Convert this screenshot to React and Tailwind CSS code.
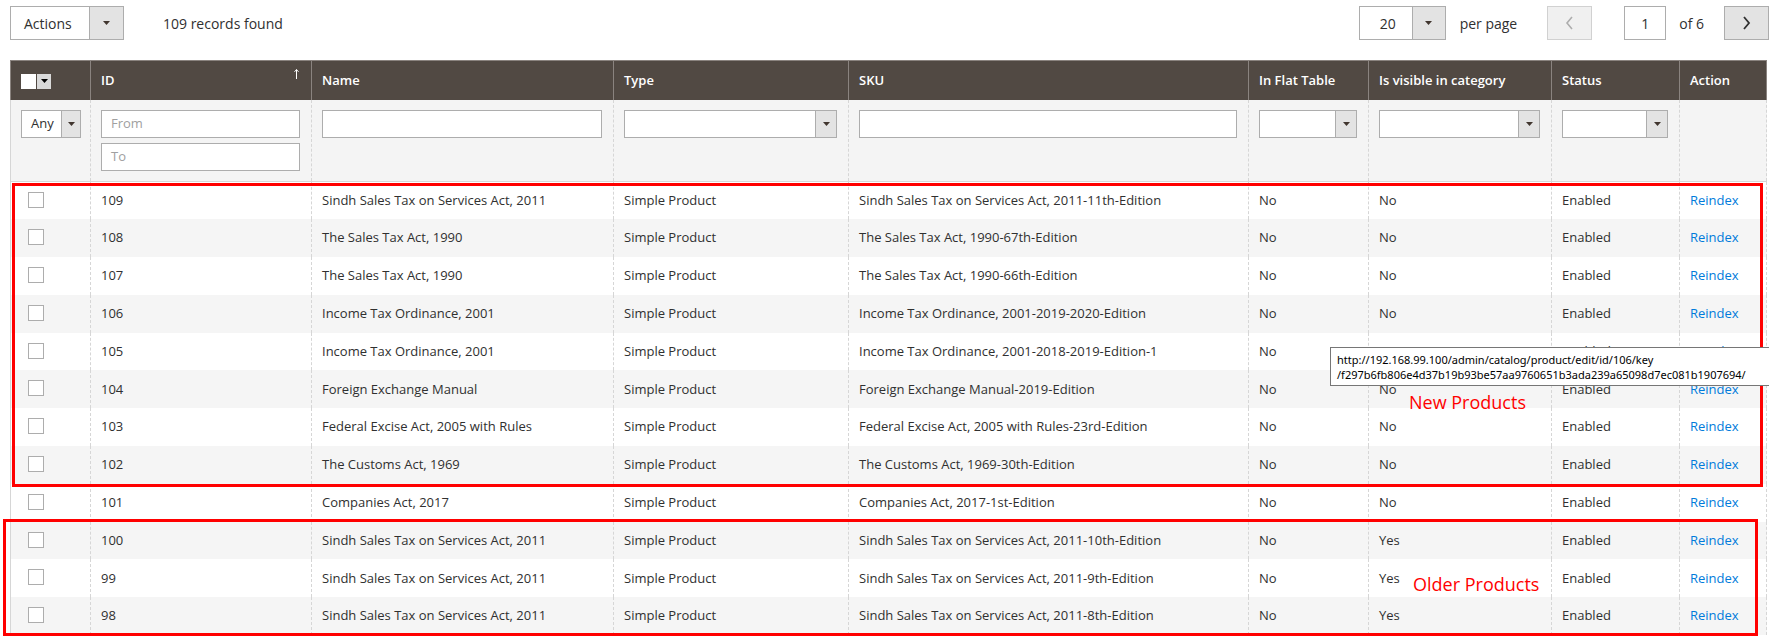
import React from "react";

const rows = [
  [109, "Sindh Sales Tax on Services Act, 2011", "Sindh Sales Tax on Services Act, 2011-11th-Edition", "No"],
  [108, "The Sales Tax Act, 1990", "The Sales Tax Act, 1990-67th-Edition", "No"],
  [107, "The Sales Tax Act, 1990", "The Sales Tax Act, 1990-66th-Edition", "No"],
  [106, "Income Tax Ordinance, 2001", "Income Tax Ordinance, 2001-2019-2020-Edition", "No"],
  [105, "Income Tax Ordinance, 2001", "Income Tax Ordinance, 2001-2018-2019-Edition-1", "No"],
  [104, "Foreign Exchange Manual", "Foreign Exchange Manual-2019-Edition", "No"],
  [103, "Federal Excise Act, 2005 with Rules", "Federal Excise Act, 2005 with Rules-23rd-Edition", "No"],
  [102, "The Customs Act, 1969", "The Customs Act, 1969-30th-Edition", "No"],
  [101, "Companies Act, 2017", "Companies Act, 2017-1st-Edition", "No"],
  [100, "Sindh Sales Tax on Services Act, 2011", "Sindh Sales Tax on Services Act, 2011-10th-Edition", "Yes"],
  [99, "Sindh Sales Tax on Services Act, 2011", "Sindh Sales Tax on Services Act, 2011-9th-Edition", "Yes"],
  [98, "Sindh Sales Tax on Services Act, 2011", "Sindh Sales Tax on Services Act, 2011-8th-Edition", "Yes"],
];

function Tri({ color = "#41362f", w = 7, h = 4 }) {
  return (
    <svg width={w} height={h} viewBox="0 0 7 4">
      <path d="M0 0h7L3.5 4z" fill={color} />
    </svg>
  );
}

function SelectBox({ text = "", arrowW = "w-[21px]" }) {
  return (
    <div className="flex h-[28px] w-full border border-[#adadad] bg-white">
      <div className="flex-1 flex items-center pl-[9px] text-[13px] text-[#303030]">{text}</div>
      <div className={`${arrowW} flex items-center justify-center border-l border-[#adadad] bg-[#e3e3e3]`}>
        <Tri />
      </div>
    </div>
  );
}

function Input({ placeholder = "" }) {
  return (
    <div className="flex h-[28px] w-full items-center border border-[#adadad] bg-white pl-[9px] text-[13px] text-[#a0a0a0]">
      {placeholder}
    </div>
  );
}

const th =
  "h-[39px] pl-[10px] pr-[11px] text-left align-middle text-[13px] font-semibold text-white bg-[#514943] border-l border-t border-[#8a837f]";
const tf = "align-top pt-[10px] pl-[10px] pr-[11px] border-l border-dashed border-[#d6d6d6]";
const td = "pl-[10px] pr-[11px] align-middle text-[13px] text-[#303030] border-l border-dashed border-[#d6d6d6] whitespace-nowrap";

export default function App() {
  return (
    <div className="relative w-[1769px] h-[638px] overflow-hidden bg-white text-[#303030] font-['Open_Sans',sans-serif]">
      {/* toolbar */}
      <div className="mt-[6px] flex h-[34px] items-center pl-[10px]">
        <div className="flex h-[34px] w-[114px] border border-[#adadad] bg-white">
          <div className="flex flex-1 items-center pl-[13px] text-[14px]">Actions</div>
          <div className="flex w-[34px] items-center justify-center border-l border-[#adadad] bg-[#e3e3e3]">
            <Tri />
          </div>
        </div>
        <div className="ml-[39px] text-[14px]">109 records found</div>

        <div className="ml-auto flex h-[34px] items-center">
          <div className="flex h-[34px] w-[87px] border border-[#adadad] bg-white">
            <div className="flex flex-1 items-center pl-[20px] text-[14px]">20</div>
            <div className="flex w-[33px] items-center justify-center border-l border-[#adadad] bg-[#e3e3e3]">
              <Tri />
            </div>
          </div>
          <div className="ml-[14px] text-[14px]">per page</div>
          <div className="ml-[30px] flex h-[34px] w-[45px] items-center justify-center border border-[#d1d1d1] bg-[#f0f0f0]">
            <svg width="9" height="14" viewBox="0 0 9 14">
              <polyline points="7,1 2,7 7,13" fill="none" stroke="#adadad" strokeWidth="1.6" />
            </svg>
          </div>
          <div className="ml-[32px] flex h-[34px] w-[42px] items-center justify-center border border-[#adadad] bg-white text-[14px]">
            1
          </div>
          <div className="ml-[13px] text-[14px]">of 6</div>
          <div className="ml-[20px] flex h-[34px] w-[45px] items-center justify-center border border-[#adadad] bg-[#e3e3e3]">
            <svg width="9" height="14" viewBox="0 0 9 14">
              <polyline points="2,1 7,7 2,13" fill="none" stroke="#303030" strokeWidth="1.8" />
            </svg>
          </div>
        </div>
      </div>

      {/* grid */}
      <table className="mt-[20px] ml-[10px] w-[1756px] table-fixed border-collapse">
        <colgroup>
          <col className="w-[80px]" />
          <col className="w-[221px]" />
          <col className="w-[302px]" />
          <col className="w-[235px]" />
          <col className="w-[400px]" />
          <col className="w-[120px]" />
          <col className="w-[183px]" />
          <col className="w-[128px]" />
          <col className="w-[87px]" />
        </colgroup>
        <thead>
          <tr>
            <th className={`${th} pl-[9px]`}>
              <div className="flex h-[15px] w-[30px] mt-[2px]">
                <div className="h-[15px] w-[15px] bg-white" />
                <div className="ml-[1px] flex h-[15px] w-[14px] items-center justify-center bg-[#d9d9d9]">
                  <Tri color="#000" w={7} h={4} />
                </div>
              </div>
            </th>
            <th className={th}>
              <div className="flex items-center justify-between">
                <span>ID</span>
                <svg width="5" height="10" viewBox="0 0 5 10" className="mb-[12px] mr-[1px]">
                  <path d="M2.5 0.5V10M0.5 2.8L2.5 0.6L4.5 2.8" fill="none" stroke="#fff" strokeWidth="1" />
                </svg>
              </div>
            </th>
            <th className={th}>Name</th>
            <th className={th}>Type</th>
            <th className={th}>SKU</th>
            <th className={th}>In Flat Table</th>
            <th className={th}>Is visible in category</th>
            <th className={th}>Status</th>
            <th className={`${th} border-r`}>Action</th>
          </tr>
        </thead>
        <tbody>
          <tr className="h-[82px] bg-[#f4f4f4] border-b border-[#d6d6d6]">
            <td className={`${tf} pl-[9px] border-solid`}>
              <div className="w-[60px]">
                <SelectBox text="Any" arrowW="w-[19px]" />
              </div>
            </td>
            <td className={`${tf} pr-[9px]`}>
              <div className="flex flex-col gap-[5px]">
                <Input placeholder="From" />
                <Input placeholder="To" />
              </div>
            </td>
            <td className={`${tf} pr-[9px]`}>
              <Input />
            </td>
            <td className={tf}>
              <SelectBox />
            </td>
            <td className={tf}>
              <Input />
            </td>
            <td className={tf}>
              <SelectBox />
            </td>
            <td className={tf}>
              <SelectBox />
            </td>
            <td className={tf}>
              <SelectBox />
            </td>
            <td className={`${tf} border-r border-r-solid`}></td>
          </tr>
          {rows.map((r, i) => (
            <tr key={r[0]} className={`h-[37.8px] ${i % 2 === 1 ? "bg-[#f5f5f5]" : "bg-white"}`}>
              <td className="pl-[17px] align-middle border-l border-[#d6d6d6]">
                <div className="h-[16px] w-[16px] border border-[#adadad] bg-white mb-[2px]" />
              </td>
              <td className={td}>{r[0]}</td>
              <td className={td}>{r[1]}</td>
              <td className={td}>Simple Product</td>
              <td className={td}>{r[2]}</td>
              <td className={td}>No</td>
              <td className={td}>{r[3]}</td>
              <td className={td}>Enabled</td>
              <td className={`${td} border-r border-r-[#d6d6d6]`}>
                <span className="text-[#007bdb]">Reindex</span>
              </td>
            </tr>
          ))}
        </tbody>
      </table>

      {/* annotations */}
      <div className="absolute left-[12px] top-[183px] h-[304px] w-[1751px] border-[3px] border-[#ff0000]" />
      <div className="absolute left-[3px] top-[519px] h-[117px] w-[1755px] border-[3px] border-[#ff0000]" />
      <div className="absolute left-[1409px] top-[390px] text-[18px] leading-[24px] text-[#ff0000]">New Products</div>
      <div className="absolute left-[1413px] top-[572px] text-[18px] leading-[24px] text-[#ff0000]">Older Products</div>

      {/* tooltip */}
      <div className="absolute left-[1330px] top-[347px] h-[39px] w-[460px] border border-[#767676] bg-white pl-[6px] pt-[4px] text-[11px] leading-[15px] text-black font-['Noto_Sans',sans-serif]">
        <div>http://192.168.99.100/admin/catalog/product/edit/id/106/key</div>
        <div>/f297b6fb806e4d37b19b93be57aa9760651b3ada239a65098d7ec081b1907694/</div>
      </div>
    </div>
  );
}
